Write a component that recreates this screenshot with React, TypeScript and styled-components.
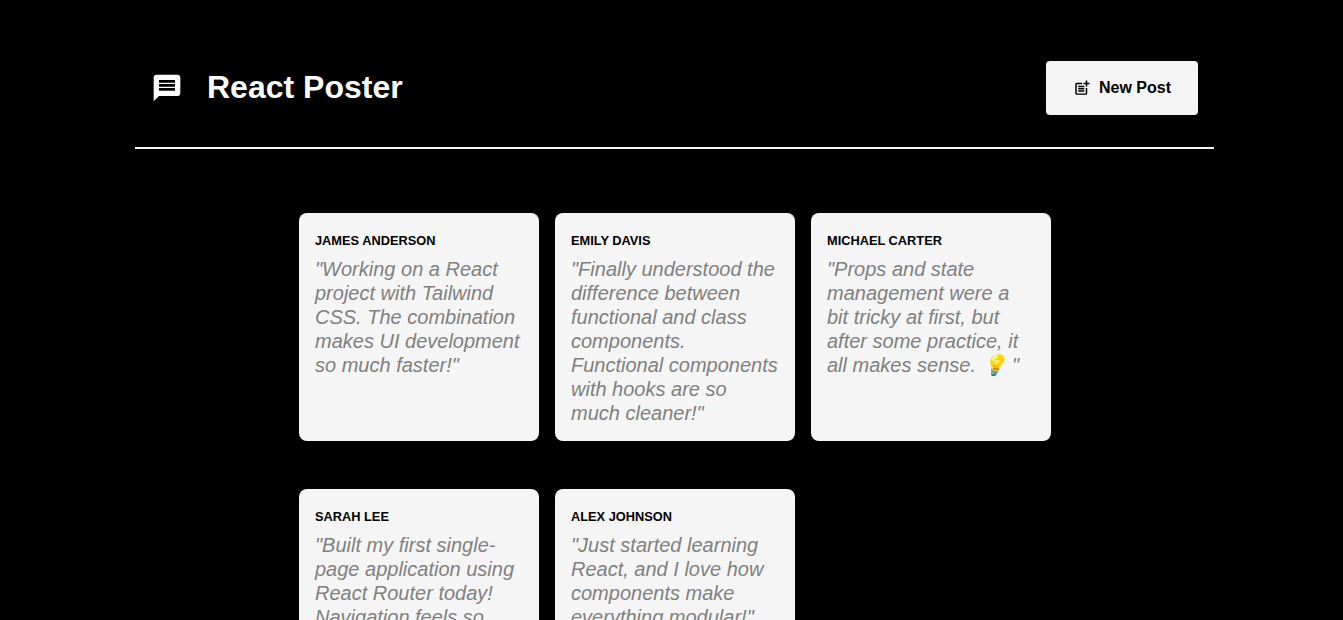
import { createGlobalStyle, styled } from 'styled-components';
import { MdMessage, MdOutlinePostAdd } from 'react-icons/md';

const GlobalStyle = createGlobalStyle`
  html, body {
    margin: 0;
    background-color: black;
    font-family: "Liberation Sans", Arial, sans-serif;
  }
`;

const Header = styled.header`
  display: flex;
  align-items: center;
  justify-content: space-between;
  box-sizing: border-box;
  width: 1079px;
  height: 149px;
  margin-left: 135px;
  padding: 34px 16px 6px 16px;
  border-bottom: 2px solid #f5f5f5;
`;

const Logo = styled.h1`
  display: flex;
  align-items: center;
  gap: 24px;
  margin: 0;
  color: white;
  font-size: 32px;
  font-weight: bold;

  svg {
    width: 32px;
    height: 32px;
  }
`;

const NewPostButton = styled.button`
  display: flex;
  align-items: center;
  justify-content: center;
  gap: 8px;
  width: 152px;
  height: 54px;
  border: none;
  border-radius: 4px;
  background-color: #f5f5f5;
  color: black;
  font-family: inherit;
  font-size: 16px;
  font-weight: bold;

  svg {
    width: 18px;
    height: 18px;
  }
`;

const PostList = styled.ul`
  display: grid;
  grid-template-columns: repeat(3, 240px);
  gap: 48px 16px;
  justify-content: center;
  margin: 64px 0 0 7px;
  padding: 0;
  list-style: none;
`;

const Card = styled.li`
  box-sizing: border-box;
  min-height: 228px;
  padding: 16px;
  border-radius: 8px;
  background-color: #f5f5f5;
`;

const Author = styled.p`
  margin: 4px 0 0;
  color: black;
  font-size: 12.8px;
  font-weight: bold;
  line-height: 15px;
  text-transform: uppercase;
`;

const Body = styled.p`
  margin: 9px 0 0;
  color: #808080;
  font-size: 20px;
  font-style: italic;
  line-height: 24px;
`;

const posts = [
  {
    author: 'James Anderson',
    body: '"Working on a React project with Tailwind CSS. The combination makes UI development so much faster!"',
  },
  {
    author: 'Emily Davis',
    body: '"Finally understood the difference between functional and class components. Functional components with hooks are so much cleaner!"',
  },
  {
    author: 'Michael Carter',
    body: '"Props and state management were a bit tricky at first, but after some practice, it all makes sense. 💡 "',
  },
  {
    author: 'Sarah Lee',
    body: '"Built my first single-page application using React Router today! Navigation feels so smooth!"',
  },
  {
    author: 'Alex Johnson',
    body: '"Just started learning React, and I love how components make everything modular!"',
  },
];

export default function App() {
  return (
    <>
      <GlobalStyle />
      <Header>
        <Logo>
          <MdMessage />
          React Poster
        </Logo>
        <NewPostButton>
          <MdOutlinePostAdd />
          New Post
        </NewPostButton>
      </Header>
      <PostList>
        {posts.map((post) => (
          <Card key={post.author}>
            <Author>{post.author}</Author>
            <Body>{post.body}</Body>
          </Card>
        ))}
      </PostList>
    </>
  );
}
